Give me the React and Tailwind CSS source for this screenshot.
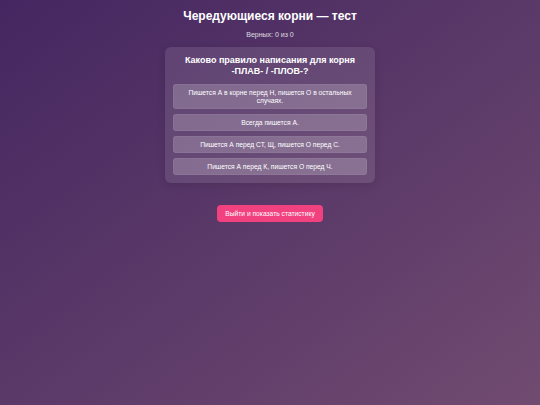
import React from 'react';

const options = [
  'Пишется А в корне перед Н, пишется О в остальных случаях.',
  'Всегда пишется А.',
  'Пишется А перед СТ, Щ, пишется О перед С.',
  'Пишется А перед К, пишется О перед Ч.',
];

export default function App() {
  return (
    <div className="min-h-[405px] w-full bg-gradient-to-br from-[#452660] to-[#714b70] font-['Liberation_Sans',Arial,sans-serif] text-white">
      <div className="flex flex-col items-center pt-[8px]">
        <h1 className="text-[12px] font-bold leading-[16px]">Чередующиеся корни — тест</h1>
        <p className="mt-[6px] text-[7px] leading-[9px] text-white/80">Верных: 0 из 0</p>

        <div className="mt-[8px] w-[210px] rounded-[6px] bg-white/10 px-[8px] pt-[8px] pb-[8px] shadow-[0_2px_8px_rgba(0,0,0,0.12)]">
          <h2 className="px-[6px] text-center text-[9px] font-bold leading-[11px]">
            Каково правило написания для корня -ПЛАВ- / -ПЛОВ-?
          </h2>
          <div className="mt-[7px] flex flex-col gap-[5px]">
            {options.map((o) => (
              <button
                key={o}
                className="w-full rounded-[3px] border border-white/5 bg-white/20 px-[10px] py-[3.5px] text-center text-[6.7px] leading-[8px] text-white"
              >
                {o}
              </button>
            ))}
          </div>
        </div>

        <button className="mt-[22px] rounded-[4px] bg-[#f2417f] px-[8px] py-[4px] text-[6.7px] leading-[9px] text-white">
          Выйти и показать статистику
        </button>
      </div>
    </div>
  );
}
